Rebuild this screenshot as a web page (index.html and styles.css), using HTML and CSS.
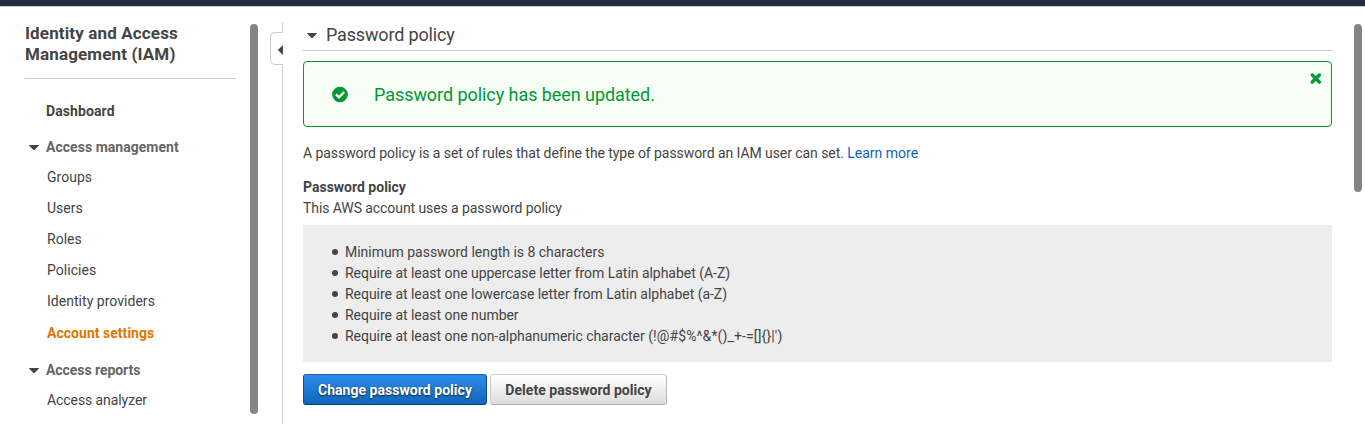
FILE: index.html
```html
<!DOCTYPE html>
<html lang="en">
<head>
<meta charset="utf-8">
<title>IAM - Password policy</title>
<link rel="stylesheet" href="styles.css">
</head>
<body>
<header class="topbar"></header>
<div class="layout">
  <nav class="sidebar">
    <h1 class="service-title">Identity and Access Management (IAM)</h1>
    <a class="nav-home">Dashboard</a>
    <div class="nav-group"><svg class="caret" viewBox="0 0 10 6"><path d="M0 .5Q0 0 .5 0H9.5Q10 0 10 .5L6 4.6Q5 5.6 4 4.6Z"/></svg><span>Access management</span></div>
    <ul class="nav-list">
      <li>Groups</li>
      <li>Users</li>
      <li>Roles</li>
      <li>Policies</li>
      <li>Identity providers</li>
      <li class="active">Account settings</li>
    </ul>
    <div class="nav-group reports"><svg class="caret" viewBox="0 0 10 6"><path d="M0 .5Q0 0 .5 0H9.5Q10 0 10 .5L6 4.6Q5 5.6 4 4.6Z"/></svg><span>Access reports</span></div>
    <ul class="nav-list">
      <li class="tight">Access analyzer</li>
    </ul>
  </nav>
  <div class="scrollbar side-scroll"></div>
  <div class="divider">
    <div class="line-start"></div>
    <div class="collapse"><svg class="collapse-arrow" viewBox="0 0 5 10"><path d="M5 0V10L.4 5.6Q0 5 .4 4.4Z"/></svg></div>
    <div class="line-rest"></div>
  </div>
  <main class="content">
    <h2 class="section-title"><svg class="caret" viewBox="0 0 10 6"><path d="M0 .5Q0 0 .5 0H9.5Q10 0 10 .5L6 4.6Q5 5.6 4 4.6Z"/></svg><span>Password policy</span></h2>
    <div class="alert">
      <svg class="check" viewBox="0 0 17 17"><circle cx="8.5" cy="8.5" r="8.3" fill="#093"/><path d="M4.2 8.3L7.4 11.4L12.9 5.9" fill="none" stroke="#f6fef6" stroke-width="2.5"/></svg>
      <span class="alert-text">Password policy has been updated.</span>
      <svg class="close" viewBox="0 0 11 11"><path d="M2.3 2L9.3 9M9.3 2L2.3 9" stroke="#093" stroke-width="3.4" stroke-linecap="round"/></svg>
    </div>
    <p class="intro">A password policy is a set of rules that define the type of password an IAM user can set. <a class="link">Learn more</a></p>
    <h3 class="subhead">Password policy</h3>
    <p class="status">This AWS account uses a password policy</p>
    <ul class="rules">
      <li>Minimum password length is 8 characters</li>
      <li>Require at least one uppercase letter from Latin alphabet (A-Z)</li>
      <li>Require at least one lowercase letter from Latin alphabet (a-Z)</li>
      <li>Require at least one number</li>
      <li class="symbols"><span>Require at least one non-alphanumeric character <span class="charset">(!@#$%^&amp;*()_+-=[]{}|')</span></span></li>
    </ul>
    <div class="actions">
      <button class="btn primary">Change password policy</button>
      <button class="btn">Delete password policy</button>
    </div>
  </main>
  <div class="scrollbar page-scroll"></div>
</div>
</body>
</html>
```

FILE: styles.css
```css
* { box-sizing: border-box; }
body {
  margin: 0;
  height: 424px;
  overflow: hidden;
  background: #fff;
  color: #444;
  font: 14px/21px Roboto, "Liberation Sans", sans-serif;
}
h1, h2, h3, p, ul { margin: 0; padding: 0; }
ul { list-style: none; }
.topbar { height: 7px; background: #232f3e; border-bottom: 1px solid #c8cbd4; }
.layout { display: flex; height: 417px; }
.sidebar { width: 211px; margin-left: 25px; padding-top: 16px; }
.service-title {
  height: 56px;
  border-bottom: 1px solid #ccc;
  font-size: 17px;
  line-height: 21px;
  font-weight: 700;
  letter-spacing: .14px;
}
.nav-home { display: block; margin: 22px 0 0 21px; font-weight: 700; letter-spacing: .1px; }
.nav-group {
  display: flex;
  align-items: center;
  gap: 7px;
  height: 21px;
  margin: 15px 0 5px 4px;
  color: #666;
  font-weight: 700;
  letter-spacing: .03px;
}
.caret { width: 10px; height: 6px; flex: none; fill: #444; }
.nav-group .caret { margin-top: 1px; }
.nav-list { padding-left: 22px; }
.nav-list li { height: 31px; line-height: 29px; white-space: nowrap; letter-spacing: .03px; }
.nav-list .active { line-height: 31px; color: #e07700; font-weight: 700; }
.nav-list .tight { letter-spacing: -.08px; }
.nav-group.reports { margin-top: 11px; letter-spacing: -.06px; }
.scrollbar { width: 8px; border-radius: 4px; background: #848484; flex: none; }
.side-scroll { height: 390px; margin: 17px 0 0 14px; }
.divider { width: 13px; margin: 15px 0 0 12px; display: flex; flex-direction: column; }
.line-start { height: 10px; border-right: 1px solid #ccc; }
.collapse {
  height: 33px;
  display: flex;
  align-items: center;
  justify-content: flex-end;
  border: 1px solid #ccc;
  border-right: 0;
  border-radius: 5px 0 0 5px;
}
.collapse-arrow { width: 5px; height: 10px; fill: #444; margin-top: 2px; }
.line-rest { flex: 1; border-right: 1px solid #ccc; }
.content { width: 1029px; margin-left: 20px; padding-top: 15px; }
.section-title {
  display: flex;
  align-items: center;
  gap: 9px;
  height: 29px;
  padding: 0 0 4px 4px;
  border-bottom: 1px solid #ccc;
  font-size: 18px;
  font-weight: 400;
  letter-spacing: -.16px;
}
.section-title .caret { margin-top: 4px; }
.alert {
  display: flex;
  align-items: center;
  height: 66px;
  margin-top: 10px;
  padding: 0 10px 0 28px;
  border: 1px solid #093;
  border-radius: 4px;
  background: #f6fef6;
  color: #093;
  font-size: 18px;
  letter-spacing: -.06px;
}
.check { width: 16px; height: 17px; margin: 0 26px 0 0; }
.close { width: 11px; height: 11px; margin: 11px 0 0 auto; align-self: flex-start; }
.intro { margin-top: 16px; letter-spacing: -.065px; }
.link { color: #0e63be; letter-spacing: 0; }
.subhead { margin-top: 13px; font-size: 14px; font-weight: 700; }
.status { letter-spacing: -.08px; }
.rules { height: 137px; margin-top: 6px; padding: 17px 0 0 29px; background: #ededed; letter-spacing: -.03px; }
.rules .charset { letter-spacing: .13px; }
.rules li { display: flex; align-items: center; gap: 7px; }
.rules li::before { content: ""; width: 6px; height: 6px; margin-bottom: 1px; border-radius: 50%; background: #444; }
.actions { display: flex; gap: 3px; margin-top: 12px; }
.btn {
  width: 177px;
  height: 31px;
  padding: 2px 0 0;
  border: 1px solid;
  border-color: #d0d0d0 #b8b8b8 #adadad #ccc;
  border-radius: 3px;
  background: linear-gradient(#fff, #ddd);
  color: #444;
  font: 700 14px/27px Roboto, "Liberation Sans", sans-serif;
  letter-spacing: .04px;
}
.btn.primary {
  width: 184px;
  border-color: #1b65ad #124884 #0b3c70 #124f91;
  background: linear-gradient(#2d8ceb, #1166bb);
  color: #fff;
  text-shadow: 0 1px 2px #123;
}
.page-scroll { height: 168px; margin: 17px 0 0 22px; }
```
